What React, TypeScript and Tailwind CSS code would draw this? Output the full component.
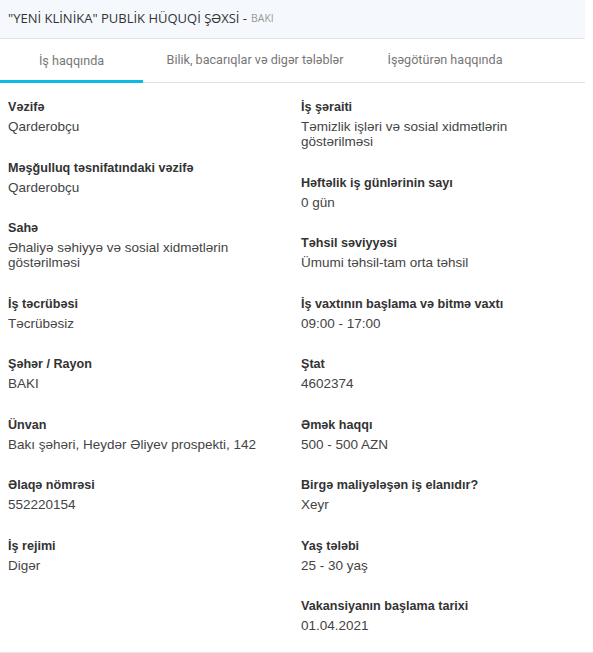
const leftItems: [string, string][] = [
  ['Vəzifə', 'Qarderobçu'],
  ['Məşğulluq təsnifatındaki vəzifə', 'Qarderobçu'],
  ['Sahə', 'Əhaliyə səhiyyə və sosial xidmətlərin göstərilməsi'],
  ['İş təcrübəsi', 'Təcrübəsiz'],
  ['Şəhər / Rayon', 'BAKI'],
  ['Ünvan', 'Bakı şəhəri, Heydər Əliyev prospekti, 142'],
  ['Əlaqə nömrəsi', '552220154'],
  ['İş rejimi', 'Digər'],
];

const rightItems: [string, string][] = [
  ['İş şəraiti', 'Təmizlik işləri və sosial xidmətlərin göstərilməsi'],
  ['Həftəlik iş günlərinin sayı', '0 gün'],
  ['Təhsil səviyyəsi', 'Ümumi təhsil-tam orta təhsil'],
  ['İş vaxtının başlama və bitmə vaxtı', '09:00 - 17:00'],
  ['Ştat', '4602374'],
  ['Əmək haqqı', '500 - 500 AZN'],
  ['Birgə maliyələşən iş elanıdır?', 'Xeyr'],
  ['Yaş tələbi', '25 - 30 yaş'],
  ['Vakansiyanın başlama tarixi', '01.04.2021'],
];

function Field({ label, value }: { label: string; value: string }) {
  return (
    <div>
      <div className="text-[12.6px] font-bold leading-[16px] text-[#333]">{label}</div>
      <div className="mt-1 max-w-[268px] text-[13.5px] leading-[15px] text-[#444]">{value}</div>
    </div>
  );
}

function Column({ items, className }: { items: [string, string][]; className: string }) {
  return (
    <div className={`flex flex-col gap-[25.5px] ${className}`}>
      {items.map(([l, v]) => (
        <Field key={l} label={l} value={v} />
      ))}
    </div>
  );
}

export default function App() {
  return (
    <div className="min-h-screen bg-white font-[Liberation_Sans,Arial,sans-serif]">
      <div className="w-[585px]">
        {/* Header */}
        <div className="flex h-[39px] items-center border-b border-[#e2e2e2] bg-[#f5f9fe] px-2 font-['Open_Sans',sans-serif]">
          <span className="text-[13px] text-[#333]">"YENİ KLİNİKA" PUBLİK HÜQUQİ ŞƏXSİ -</span>
          <span className="ml-1 text-[10.5px] text-[#999]">BAKI</span>
        </div>

        {/* Tabs */}
        <div className="flex h-[44px] border-b border-[#e2e2e2] font-['Roboto',sans-serif] text-[12.6px] text-[#777]">
          <div className="-mb-px flex w-[143px] items-center justify-center border-b-[3px] border-[#0bbbe6] pt-[3px]">
            İş haqqında
          </div>
          <div className="flex w-[224px] items-center justify-center">Bilik, bacarıqlar və digər tələblər</div>
          <div className="flex w-[156px] items-center justify-center">İşəgötürən haqqında</div>
        </div>

        {/* Content */}
        <div className="flex pt-[16px] pb-[19px]">
          <Column items={leftItems} className="w-[301px] pl-2" />
          <Column items={rightItems} className="flex-1" />
        </div>
      </div>
      <div className="border-b border-[#e6e6e6]" />
    </div>
  );
}
